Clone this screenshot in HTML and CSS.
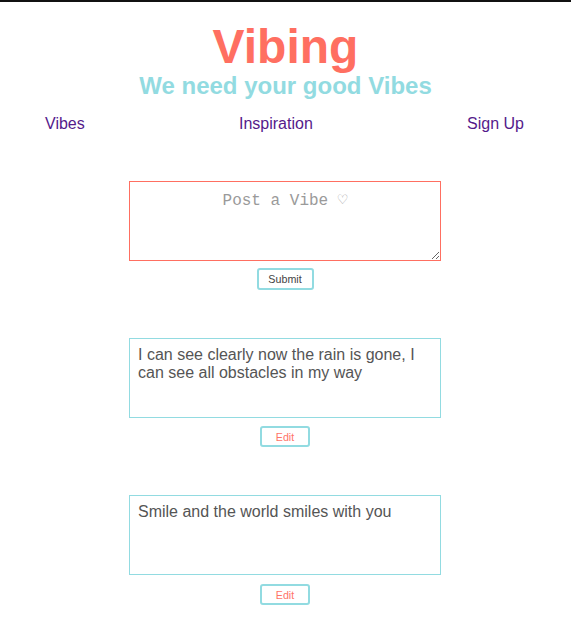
FILE: index.html
```html
<!DOCTYPE html>
<html lang="en">
<head>
<meta charset="utf-8">
<title>Vibing</title>
<link rel="stylesheet" href="styles.css">
</head>
<body>
<header class="header">
  <h1 class="title">Vibing</h1>
  <h2 class="subtitle">We need your good Vibes</h2>
  <nav class="nav">
    <a class="nav-link" href="#vibes">Vibes</a>
    <a class="nav-link" href="#inspiration">Inspiration</a>
    <a class="nav-link" href="#signup">Sign Up</a>
  </nav>
</header>
<main class="main">
  <form class="composer">
    <textarea class="composer-input" placeholder="Post a Vibe ♡"></textarea>
    <button class="btn btn-submit" type="button">Submit</button>
  </form>
  <section class="post">
    <div class="post-body">I can see clearly now the rain is gone, I can see all obstacles in my way</div>
    <button class="btn btn-edit" type="button">Edit</button>
  </section>
  <section class="post">
    <div class="post-body">Smile and the world smiles with you</div>
    <button class="btn btn-edit btn-edit-last" type="button">Edit</button>
  </section>
</main>
</body>
</html>
```

FILE: styles.css
```css
html, body {
  margin: 0;
  padding: 0;
  background: #ffffff;
}

body {
  border-top: 2px solid #111111;
  font-family: "Liberation Sans", Arial, sans-serif;
}

.header {
  display: flex;
  flex-direction: column;
  align-items: stretch;
  padding-top: 17px;
}

.title {
  margin: 0;
  font-size: 48px;
  line-height: 55px;
  font-weight: bold;
  color: #ff6f61;
  text-align: center;
}

.subtitle {
  margin: -2px 0 0 0;
  font-size: 24px;
  line-height: 28px;
  font-weight: bold;
  color: #92dbe1;
  text-align: center;
}

.nav {
  display: flex;
  justify-content: space-between;
  margin-top: 15px;
  padding: 0 47px 0 45px;
  font-size: 16px;
  line-height: 18px;
}

.nav-link {
  color: #551a8b;
  text-decoration: none;
}

.main {
  display: flex;
  flex-direction: column;
  align-items: center;
  margin-top: 48px;
  padding-right: 1px;
}

.composer {
  display: flex;
  flex-direction: column;
  align-items: center;
  margin: 0;
}

.composer-input {
  display: block;
  box-sizing: border-box;
  width: 312px;
  height: 80px;
  margin: 0;
  padding: 10px 8px 8px;
  border: 1px solid #ff6f61;
  border-radius: 0;
  outline: none;
  font-family: "Liberation Mono", "Courier New", monospace;
  font-size: 16px;
  line-height: 18px;
  text-align: center;
  color: #555555;
  background: #ffffff;
}

.composer-input::placeholder {
  color: #9a9a9a;
}

.btn {
  display: block;
  box-sizing: border-box;
  margin: 0;
  border: 2px solid #92dbe1;
  border-radius: 3px;
  background: #ffffff;
  font-family: "Liberation Sans", Arial, sans-serif;
  font-size: 10.7px;
  line-height: 12px;
  cursor: pointer;
}

.btn-submit {
  margin-top: 7px;
  width: 57px;
  height: 22px;
  padding: 0;
  color: #444444;
}

.post {
  display: flex;
  flex-direction: column;
  align-items: center;
  margin-top: 48px;
}

.post-body {
  box-sizing: border-box;
  width: 312px;
  height: 80px;
  padding: 7px 8px 7px 8px;
  border: 1px solid #92dbe1;
  font-size: 16px;
  line-height: 18px;
  color: #555555;
}

.btn-edit {
  margin-top: 8px;
  width: 50px;
  height: 21px;
  padding: 0;
  color: #ff7468;
}

.btn-edit-last {
  margin-top: 9px;
}
```
